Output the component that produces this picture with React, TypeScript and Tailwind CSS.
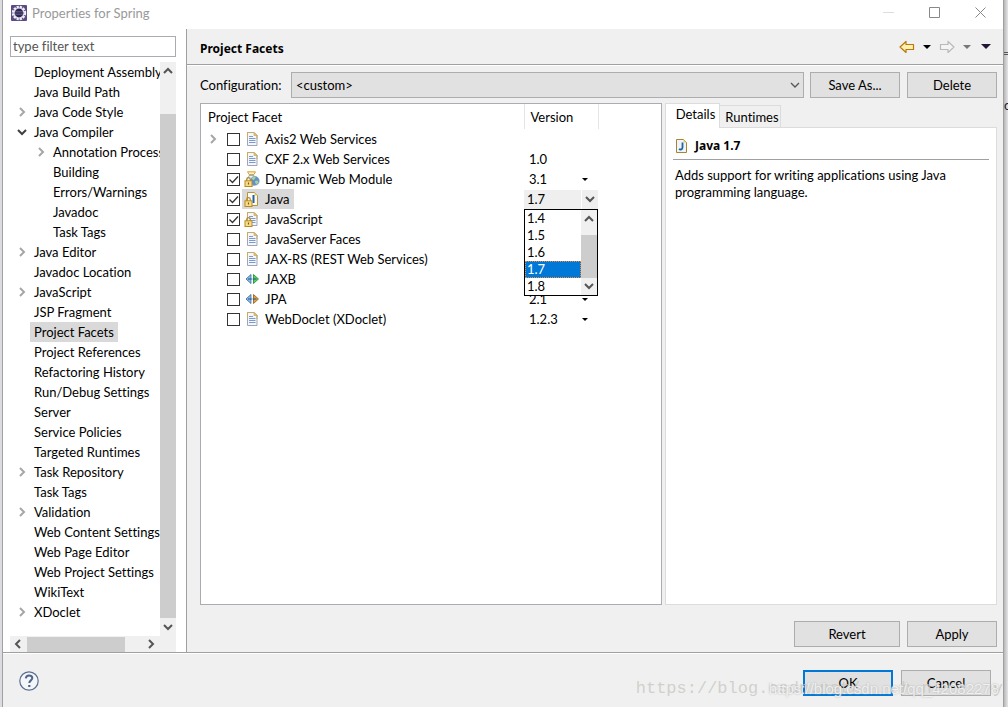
import { useState } from "react";
import type { ReactNode } from "react";

type Node = { label: string; level?: number; state?: "open" | "closed"; selected?: boolean };

const tree: Node[] = [
  { label: "Deployment Assembly" },
  { label: "Java Build Path" },
  { label: "Java Code Style", state: "closed" },
  { label: "Java Compiler", state: "open" },
  { label: "Annotation Processing", level: 1, state: "closed" },
  { label: "Building", level: 1 },
  { label: "Errors/Warnings", level: 1 },
  { label: "Javadoc", level: 1 },
  { label: "Task Tags", level: 1 },
  { label: "Java Editor", state: "closed" },
  { label: "Javadoc Location" },
  { label: "JavaScript", state: "closed" },
  { label: "JSP Fragment" },
  { label: "Project Facets", selected: true },
  { label: "Project References" },
  { label: "Refactoring History" },
  { label: "Run/Debug Settings" },
  { label: "Server" },
  { label: "Service Policies" },
  { label: "Targeted Runtimes" },
  { label: "Task Repository", state: "closed" },
  { label: "Task Tags" },
  { label: "Validation", state: "closed" },
  { label: "Web Content Settings" },
  { label: "Web Page Editor" },
  { label: "Web Project Settings" },
  { label: "WikiText" },
  { label: "XDoclet", state: "closed" },
];

type IconKind = "doc" | "globe" | "java" | "lockdoc" | "green" | "orange";
type Facet = { label: string; icon: IconKind; version?: string; menu?: boolean; checked?: boolean; expandable?: boolean; editing?: boolean };

const facets: Facet[] = [
  { label: "Axis2 Web Services", icon: "doc", expandable: true },
  { label: "CXF 2.x Web Services", icon: "doc", version: "1.0" },
  { label: "Dynamic Web Module", icon: "globe", version: "3.1", menu: true, checked: true },
  { label: "Java", icon: "java", checked: true, editing: true },
  { label: "JavaScript", icon: "lockdoc", checked: true },
  { label: "JavaServer Faces", icon: "doc" },
  { label: "JAX-RS (REST Web Services)", icon: "doc" },
  { label: "JAXB", icon: "green" },
  { label: "JPA", icon: "orange", version: "2.1", menu: true },
  { label: "WebDoclet (XDoclet)", icon: "doc", version: "1.2.3", menu: true },
];

function Chevron({ dir, className = "text-[#555]", thick = 2 }: { dir: "up" | "down" | "left" | "right"; className?: string; thick?: number }) {
  const d = {
    up: "M2 8l4-4 4 4",
    down: "M2 4l4 4 4-4",
    left: "M8 2L4 6l4 4",
    right: "M4 2l4 4-4 4",
  }[dir];
  return (
    <svg viewBox="0 0 12 12" className={`size-3 shrink-0 ${className}`} fill="none" stroke="currentColor" strokeWidth={thick} aria-hidden="true">
      <path d={d} />
    </svg>
  );
}

function Page() {
  return (
    <>
      <path d="M3.5 1.5h6.5l3 3v10h-9.500z" fill="#f3f7fd" stroke="#9fa5b4" />
      <path d="M3.500 8V1.500H10l3 3V8" fill="none" stroke="#c8ac62" />
      <path d="M10 1.500v3h3z" fill="#e8c873" stroke="#c8a050" strokeWidth=".6" />
      <path d="M5 5.500h4M5 7.500h6.500M5 9.500h6.500M5 11.500h6.500" stroke="#7d9acb" />
    </>
  );
}

function Lock() {
  return (
    <>
      <path d="M2.700 10V8.500a1.800 1.800 0 0 1 3.600 0V10" fill="none" stroke="#b98a24" strokeWidth="1.200" />
      <rect x="1" y="9.800" width="7" height="5.700" fill="#f8dc86" stroke="#b98a24" />
      <path d="M4.500 11.500v2" stroke="#7d5a10" strokeWidth="1.200" />
    </>
  );
}

function FacetIcon({ kind }: { kind: IconKind }) {
  let art: ReactNode;
  if (kind === "doc") art = <Page />;
  else if (kind === "lockdoc") art = <><Page /><Lock /></>;
  else if (kind === "globe")
    art = (
      <>
        <path d="M3.500.8h8l-1.600 2.700H5.100z" fill="#fff3bf" stroke="#d5a632" />
        <path d="M5 4.500c0 2-2.500 2.500-2.500 5.500 0 3 2.200 5 5 5s4.500-2 5-5c0-3-2.500-3.500-2.500-5.500z" fill="#e9f1fb" stroke="#97b0d1" />
        <circle cx="10.800" cy="9.800" r="4.400" fill="#5c92cd" stroke="#7d9bc0" strokeWidth=".7" />
        <path d="M7.500 7.500c1.500-2 3-2 4-1.500.5 1-1 1.200-1 2.500-1 1-2 .5-3-1zM11 10l2.500-.5 1 1.500-2 2.500c-1-1-1.500-2-1.500-3.500z" fill="#a9d19a" />
        <Lock />
      </>
    );
  else if (kind === "java")
    art = (
      <>
        <path d="M3.500 1.500h7l3 3v10h-10z" fill="#f7fafe" stroke="#bd952f" />
        <path d="M10.500 1.500v3h3z" fill="#e8c873" />
        <path d="M9.500 4v8" fill="none" stroke="#23649a" strokeWidth="2" />
        <Lock />
      </>
    );
  else
    art = (
      <>
        <path d="M7 3.500v9L2 8z" fill="#8fc0ec" stroke="#3d6ea5" strokeWidth=".9" />
        <path d="M9.500 3.500v9l5-4.500z" fill={kind === "green" ? "#54d062" : "#e6a13c"} stroke={kind === "green" ? "#259638" : "#9c651c"} strokeWidth=".9" />
        <path d="M4 8h8.500" stroke="#2f5e95" strokeWidth="1.200" />
        <path d="M8.250 3v10" stroke="#fff" strokeWidth=".8" />
      </>
    );
  return <svg viewBox="0 0 16 16" className="size-4 shrink-0" aria-hidden="true">{art}</svg>;
}

function Check({ label, checked }: { label: string; checked?: boolean }) {
  const [on, setOn] = useState(!!checked);
  return (
    <span className="grid shrink-0">
      <input id={label} type="checkbox" checked={on} onChange={() => setOn(!on)} className="col-start-1 row-start-1 size-[13px] appearance-none border border-[#333] bg-white" />
      {on && (
        <svg viewBox="0 0 13 13" className="pointer-events-none col-start-1 row-start-1 size-[13px]" fill="none" stroke="#333" strokeWidth="1.300" aria-hidden="true">
          <path d="M2.500 6.500l3 3 5.500-6" />
        </svg>
      )}
    </span>
  );
}

function Button({ children, wide, primary }: { children: ReactNode; wide?: boolean; primary?: boolean }) {
  return (
    <button
      type="button"
      className={`h-[26px] shrink-0 bg-[#e1e1e1] leading-5 ${wide ? "w-[106px]" : "w-[90px]"} ${primary ? "border-2 border-[#0078d7]" : "border border-[#adadad]"}`}
    >
      {children}
    </button>
  );
}

function GearLogo() {
  return (
    <svg viewBox="0 0 16 16" className="size-4" aria-hidden="true">
      <rect width="16" height="16" rx="1" fill="#5c4a86" />
      <circle cx="8" cy="8" r="5.900" fill="none" stroke="#f1eff6" strokeWidth="2.600" strokeDasharray="2.200 .89" />
      <circle cx="8" cy="8" r="5" fill="#2c2550" stroke="#e8e5f0" strokeWidth="1.200" />
      <path d="M4 6.500h8M3.500 8h9M4 9.500h8" stroke="#6e668f" strokeWidth=".7" />
    </svg>
  );
}

function HeaderArrow({ dir }: { dir: "back" | "forward" }) {
  const back = dir === "back";
  return (
    <svg viewBox="0 0 16 14" className="h-3.5 w-4" aria-hidden="true">
      <path
        d={back ? "M1 7l6-5.500v3h7.500v5H7v3z" : "M15 7L9 1.500v3H1.500v5H9v3z"}
        fill={back ? "#fdf0b0" : "#f4f4f4"}
        stroke={back ? "#b8790a" : "#b9b9b9"}
        strokeWidth="1.200"
        strokeLinejoin="round"
      />
    </svg>
  );
}

function Triangle({ className }: { className: string }) {
  return (
    <svg viewBox="0 0 8 4" className={className} fill="currentColor" aria-hidden="true">
      <path d="M0 0h8L4 4z" />
    </svg>
  );
}

function TitleBar() {
  return (
    <header className="flex h-[29px] items-center bg-white pb-1 pl-2 text-[#999]">
      <GearLogo />
      <h1 className="ml-[5px] flex-1">Properties for Spring</h1>
      <button type="button" aria-label="Minimize" className="flex w-[46px] justify-center">
        <svg viewBox="0 0 11 11" className="size-[11px]" stroke="#ddd"><path d="M0 5.500h11" /></svg>
      </button>
      <button type="button" aria-label="Maximize" className="flex w-[46px] justify-center">
        <svg viewBox="0 0 11 11" className="size-[11px]" fill="none" stroke="#888"><path d="M.5.5h10v10H.5z" /></svg>
      </button>
      <button type="button" aria-label="Close" className="flex w-[46px] justify-center">
        <svg viewBox="0 0 11 11" className="size-[11px]" stroke="#888"><path d="M.5.5l10 10M10.500.5l-10 10" /></svg>
      </button>
    </header>
  );
}

function Sidebar() {
  return (
    <nav className="flex w-[184px] shrink-0 flex-col border-r border-[#a0a0a0] bg-white pl-[7px] pr-2.5 pt-[7px]">
      <input aria-label="Filter" placeholder="type filter text" className="h-[21px] w-full border border-[#ababb3] px-0.5 pb-0.5 placeholder:text-[#555]" />
      <div className="mt-[5px] flex flex-1 bg-white">
        <ul className="min-w-0 flex-1 overflow-hidden pb-[13px]">
          {tree.map((n, i) => (
            <li key={i} className={`flex h-5 items-center whitespace-nowrap ${n.level ? "pl-[25px]" : "pl-1.5"}`}>
              <span className="w-3.5 shrink-0">
                {n.state && <Chevron dir={n.state === "open" ? "down" : "right"} className={n.state === "open" ? "text-[#404040]" : "text-[#a6a6a6]"} />}
              </span>
              <a href="#" className={`h-5 px-1 leading-5 ${n.selected ? "bg-[#d9d9d9]" : ""}`}>{n.label}</a>
            </li>
          ))}
        </ul>
        <div className="flex w-4 shrink-0 flex-col items-center bg-[#f0f0f0] pb-[3px] pt-[3px]">
          <Chevron dir="up" />
          <div className="mb-[3px] mt-[37px] w-full flex-1 bg-[#cdcdcd]" />
          <Chevron dir="down" />
        </div>
      </div>
      <div className="flex h-4 items-center bg-[#f0f0f0] pl-0.5 pr-[19px]">
        <Chevron dir="left" />
        <div className="ml-[3px] h-[15px] w-[98px] bg-[#cdcdcd]" />
        <span className="flex-1" />
        <Chevron dir="right" />
      </div>
    </nav>
  );
}

function VersionEditor() {
  const [value, setValue] = useState("1.7");
  return (
    <div className="relative h-5">
      <div className="grid h-5 w-[74px] items-center">
        <select aria-label="Java version" value={value} onChange={(e) => setValue(e.target.value)} className="col-start-1 row-start-1 h-[19px] appearance-none bg-[#efefef] pl-[3px] leading-4">
          {["1.4", "1.5", "1.6", "1.7", "1.8"].map((v) => <option key={v}>{v}</option>)}
        </select>
        <span className="pointer-events-none col-start-1 row-start-1 flex h-[19px] w-[17px] items-center justify-center justify-self-end border-l border-white">
          <Chevron dir="down" />
        </span>
      </div>
      <div className="absolute left-0 top-5 z-10 flex h-[87px] w-[74px] border border-black bg-white">
        <ul role="listbox" aria-label="Versions" className="flex-1">
          {["1.4", "1.5", "1.6", "1.7", "1.8"].map((v) => (
            <li
              key={v}
              role="option"
              aria-selected={v === value}
              onClick={() => setValue(v)}
              className={`h-[17px] pl-0.5 leading-[17px] ${v === value ? "bg-[#0078d7] text-white outline-1 -outline-offset-1 outline-dotted outline-[#ff8728]" : ""}`}
            >
              {v}
            </li>
          ))}
        </ul>
        <div className="flex w-4 flex-col items-center bg-[#f0f0f0] py-[3px]">
          <Chevron dir="up" />
          <div className="mb-0.5 mt-2.5 w-full flex-1 bg-[#cdcdcd]" />
          <Chevron dir="down" />
        </div>
      </div>
    </div>
  );
}

function FacetTable() {
  return (
    <div className="border border-[#ababb3] bg-white">
      <table className="w-full table-fixed border-collapse text-left">
        <colgroup>
          <col />
          <col className="w-[74px]" />
          <col className="w-[63px]" />
        </colgroup>
        <thead>
          <tr className="h-[25px]">
            <th className="border-r border-[#e5e5e5] p-0 pl-[7px] font-normal">Project Facet</th>
            <th className="border-r border-[#e5e5e5] p-0 pl-1.5 font-normal">Version</th>
            <th className="p-0" aria-label="Spare" />
          </tr>
        </thead>
        <tbody>
          {facets.map((f) => (
            <tr key={f.label} className="h-5">
              <td className="p-0">
                <div className="flex h-5 items-center pl-1.5">
                  <span className="w-5 shrink-0">{f.expandable && <Chevron dir="right" className="text-[#a6a6a6]" />}</span>
                  <Check label={f.label} checked={f.checked} />
                  <label htmlFor={f.label} className={`ml-0.5 flex h-5 items-center gap-[5px] whitespace-nowrap pl-0.5 pr-1 leading-5 ${f.editing ? "bg-[#d9d9d9]" : ""}`}>
                    <FacetIcon kind={f.icon} />
                    {f.label}
                  </label>
                </div>
              </td>
              <td className="p-0">
                {f.editing ? (
                  <VersionEditor />
                ) : (
                  <div className="flex h-5 items-center justify-between pl-[5px] pr-2.5">
                    {f.version}
                    {f.menu && <Triangle className="h-[3px] w-1.5" />}
                  </div>
                )}
              </td>
              <td className="p-0" />
            </tr>
          ))}
        </tbody>
      </table>
    </div>
  );
}

function Details() {
  return (
    <section className="flex flex-col">
      <div role="tablist" className="flex h-6 items-end">
        <button role="tab" aria-selected="true" type="button" className="z-10 -mb-px h-[25px] w-[55px] border border-b-0 border-[#dcdcdc] bg-white pb-1 pl-1.5 leading-5">Details</button>
        <button role="tab" aria-selected="false" type="button" className="h-[22px] w-[61px] border border-b-0 border-l-0 border-[#dcdcdc] pl-1 leading-5">Runtimes</button>
      </div>
      <div className="flex-1 border border-[#dcdcdc] bg-white px-[7px] pt-2">
        <h3 className="flex h-6 items-center gap-1.5 border-b border-[#a0a0a0] pb-1 font-['Noto_Sans'] text-[12px] font-bold">
          <svg viewBox="0 0 16 16" className="size-4" aria-hidden="true">
            <path d="M3.500 1.500h7l3 3v10h-10z" fill="#eef4fc" stroke="#a8842e" />
            <path d="M10.500 1.500v3h3z" fill="#e8c873" />
            <path d="M9.500 4.500v5c0 2-2 2.500-3.500 1.500" fill="none" stroke="#23649a" strokeWidth="1.800" />
          </svg>
          Java 1.7
        </h3>
        <p className="mt-[7px] px-0.5 leading-[17px]">Adds support for writing applications using Java programming language.</p>
      </div>
    </section>
  );
}

export default function App() {
  return (
    <div className="flex min-h-screen w-full bg-[#e3e3e6] font-['Lato','Noto_Sans',sans-serif] text-[13px] leading-5 text-black [font-variant-ligatures:none]">
      <div className="w-0.5 shrink-0 bg-[#dcdce0]" />
      <main className="relative flex min-w-0 flex-1 flex-col border-x border-[#a0a0a0] bg-[#f0f0f0]">
        <TitleBar />
        <div className="flex flex-1">
          <Sidebar />
          <div className="flex min-w-0 flex-1 flex-col">
            <div className="flex h-9 shrink-0 items-center border-b border-[#a0a0a0] pl-[13px] pr-3">
              <h2 className="flex-1 pt-1 font-['Noto_Sans'] text-[12px] font-bold">Project Facets</h2>
              <div className="flex items-center gap-2">
                <button type="button" aria-label="Back"><HeaderArrow dir="back" /></button>
                <button type="button" aria-label="Back history"><Triangle className="h-1 w-2 text-black" /></button>
                <button type="button" aria-label="Forward"><HeaderArrow dir="forward" /></button>
                <button type="button" aria-label="Forward history"><Triangle className="h-1 w-2 text-[#777]" /></button>
                <button type="button" aria-label="Menu" className="ml-0.5"><Triangle className="h-[5px] w-2.5 text-[#221733]" /></button>
              </div>
            </div>
            <div className="flex flex-1 flex-col border-t border-white pb-[5px] pl-[13px] pr-1.5 pt-1.5">
              <div className="flex items-center">
                <label htmlFor="configuration" className="w-[91px] shrink-0">Configuration:</label>
                <div className="grid min-w-0 flex-1 items-center">
                  <select id="configuration" className="col-start-1 row-start-1 h-[26px] w-full appearance-none border border-[#adadad] bg-[#e1e1e1] px-1">
                    <option>&lt;custom&gt;</option>
                  </select>
                  <span className="pointer-events-none col-start-1 row-start-1 mr-[3px] justify-self-end"><Chevron dir="down" thick={1.3} /></span>
                </div>
                <div className="ml-1.5 flex gap-[7px]">
                  <Button>Save As...</Button>
                  <Button>Delete</Button>
                </div>
              </div>
              <div className="mt-[5px] grid flex-1 grid-cols-[462fr_332fr] gap-[3px]">
                <FacetTable />
                <Details />
              </div>
              <div className="mt-4 flex justify-end gap-[7px]">
                <Button wide>Revert</Button>
                <Button>Apply</Button>
              </div>
            </div>
          </div>
        </div>
        <footer className="border-t border-[#a0a0a0]">
          <div className="flex h-[54px] items-center border-t border-white pl-4 pr-3">
            <button type="button" aria-label="Help" className="mr-auto">
              <svg viewBox="0 0 20 20" className="size-5" aria-hidden="true" fill="none">
                <circle cx="10" cy="10" r="9.200" fill="#f4f6fa" stroke="#5a6f90" strokeWidth="1.200" />
                <path d="M6.800 7.300c.2-2 1.600-2.900 3.300-2.900 1.900 0 3.200 1.100 3.200 2.700 0 2.300-3 2.300-3 5" stroke="#50658a" strokeWidth="2" />
                <path d="M9.200 14h2.200v2H9.200z" fill="#50658a" />
              </svg>
            </button>
            <div className="flex gap-2 pt-1">
              <Button primary>OK</Button>
              <Button>Cancel</Button>
            </div>
          </div>
        </footer>
        <div className="pointer-events-none absolute bottom-2 right-0 whitespace-pre font-['Liberation_Mono'] text-[17px] text-[#c8c8c2]/80">
          {"https://blog.csdn.net/    h n      y"}
        </div>
        <div className="pointer-events-none absolute bottom-2 right-1 whitespace-nowrap font-['Liberation_Sans'] text-[15px] text-white/75 [text-shadow:0_0_2px_#aaa]">
          https://blog.csdn.net/qq_42082278
        </div>
      </main>
      <div className="flex w-1 shrink-0 flex-col overflow-hidden bg-linear-to-r from-[#b8b8b8] to-[#e6e6ea]">
        <div className="mt-[52px] h-[3px] shrink-0 border-y border-[#555]" />
        <span className="mt-10 text-[#222]">of</span>
      </div>
    </div>
  );
}
